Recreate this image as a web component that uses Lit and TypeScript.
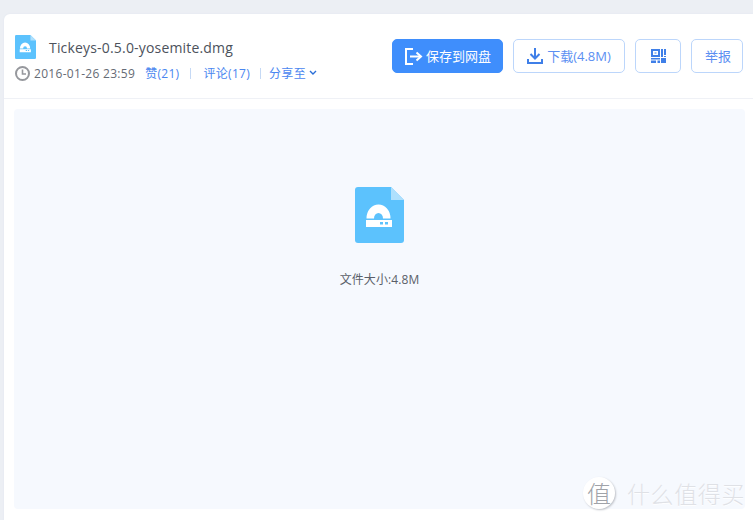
import { LitElement, html, css } from "lit";
import { customElement } from "lit/decorators.js";

const fileIcon = (w: number, h: number) => html`<svg width=${w} height=${h} viewBox="0 0 49 56">
  <path d="M3 0H36L49 13V53a3 3 0 0 1-3 3H3a3 3 0 0 1-3-3V3a3 3 0 0 1 3-3z" fill="#5cc2fd"/>
  <path d="M36 0L49 13H36z" fill="#aee0fd"/>
  <path d="M11.500 31.500a12 14 0 0 1 24 0h-7.500a4.500 5.500 0 0 0-9 0z" fill="#fff"/>
  <path fill-rule="evenodd" d="M11 33H37V40H11zM25 35v2.500h3V35zM30 35v2.500h3V35z" fill="#fff"/>
</svg>`;

@customElement("app-root")
export class AppRoot extends LitElement {
  static styles = css`
    :host {
      display: block;
      width: 753px;
      height: 520px;
      overflow: hidden;
      background: #eceff4;
      padding: 14px 0 0 4px;
      box-sizing: border-box;
      font-family: "Open Sans", "Noto Sans CJK SC", sans-serif;
      font-size: 13px;
      color: #5a5f69;
    }
    .card {
      position: relative;
      height: 506px;
      background: #fff;
      border-radius: 6px 0 0 0;
      box-shadow: 0 0 2px #dfe4ee;
    }
    .head {
      height: 85px;
      box-sizing: border-box;
      border-bottom: 1px solid #eff1f6;
      display: flex;
      justify-content: space-between;
      padding: 20px 10px 0 11px;
    }
    .title {
      display: flex;
      align-items: center;
      height: 26px;
      gap: 13px;
      font-size: 14px;
      color: #4c525c;
      letter-spacing: 0.18px;
    }
    .title svg { display: block; }
    .meta {
      display: flex;
      align-items: center;
      height: 20px;
      margin-top: 3px;
      font-size: 12px;
      color: #666b75;
      letter-spacing: 0.3px;
    }
    .clock { margin-right: 4px; display: block; }
    .link { color: #4a86f0; }
    .sep { width: 1px; height: 11px; background: #c5d9f5; margin: 0 12px 0 11px; }
    .date { margin-right: 10px; }
    .share-sep { margin: 0 8px 0 10px; }
    .chev { margin-left: 3px; display: block; }
    .actions { display: flex; gap: 10px; padding-top: 5px; }
    .btn {
      height: 34px;
      box-sizing: border-box;
      border: 1px solid #bcd6fb;
      border-radius: 5px;
      background: #fff;
      color: #5b8ff2;
      display: flex;
      align-items: center;
      justify-content: center;
      gap: 3px;
      font-size: 13px;
      white-space: nowrap;
    }
    .btn span { position: relative; top: -1px; }
    .btn svg { display: block; }
    .save { width: 111px; background: #3f8efc; border-color: #3f8efc; color: #fff; }
    .down { width: 112px; gap: 4px; }
    .qr { width: 46px; }
    .rep { width: 52px; padding-left: 2px; }
    .panel {
      margin: 10px 8px 0 10px;
      height: 400px;
      background: #f6f9fe;
      border-radius: 4px;
      display: flex;
      flex-direction: column;
      align-items: center;
      padding-top: 78px;
      box-sizing: border-box;
    }
    .panel svg { display: block; }
    .size { margin-top: 28px; font-size: 12px; color: #5a5f69; line-height: 18px; letter-spacing: 0.1px; }
    .mark {
      position: absolute;
      right: 8px;
      bottom: 10px;
      display: flex;
      align-items: center;
      gap: 12px;
      color: #dfe1e6;
      font-size: 23px;
      letter-spacing: 0.6px;
      text-shadow: 0 1px 1px #fff;
      font-family: "Noto Sans CJK SC", sans-serif;
      font-weight: 300;
    }
    .badge {
      width: 32px;
      height: 32px;
      border-radius: 50%;
      background: #fff;
      box-shadow: 1px 1px 2px #bfc2c8;
      color: #a0a3a9;
      text-shadow: none;
      font-size: 24px;
      line-height: 32px;
      text-align: center;
      letter-spacing: 0;
    }
  `;

  render() {
    return html`<div class="card">
      <div class="head">
        <div>
          <div class="title">${fileIcon(21, 24)}<span>Tickeys-0.5.0-yosemite.dmg</span></div>
          <div class="meta">
            <svg class="clock" width="15" height="15" viewBox="0 0 15 15">
              <circle cx="7.500" cy="7.500" r="6.500" fill="none" stroke="#96989d" stroke-width="2"/>
              <path d="M7.500 3.500V8H11" fill="none" stroke="#96989d" stroke-width="1.600"/>
            </svg>
            <span class="date">2016-01-26 23:59</span>
            <span class="link">赞(21)</span><span class="sep"></span>
            <span class="link">评论(17)</span><span class="sep share-sep"></span>
            <span class="link">分享至</span>
            <svg class="chev" width="8" height="6" viewBox="0 0 8 6"><path d="M1 1l3 3 3-3" fill="none" stroke="#2a6fd8" stroke-width="1.400"/></svg>
          </div>
        </div>
        <div class="actions">
          <div class="btn save">
            <svg width="19" height="17" viewBox="0 0 19 17">
              <path d="M9 1H2v15h7M6 8.500h10" fill="none" stroke="#fff" stroke-width="2"/>
              <path d="M12.500 4.500l4.500 4-4.500 4" fill="none" stroke="#fff" stroke-width="2"/>
            </svg>
            <span>保存到网盘</span>
          </div>
          <div class="btn down">
            <svg width="16" height="16" viewBox="0 0 16 16">
              <path d="M8 0v10" stroke="#3f7fe8" stroke-width="2" fill="none"/>
              <path d="M3.500 6L8 10.500 12.500 6" stroke="#3f7fe8" stroke-width="2" fill="none"/>
              <path d="M1 11v4h14v-4" stroke="#3f7fe8" stroke-width="2" fill="none"/>
            </svg>
            <span>下载(4.8M)</span>
          </div>
          <div class="btn qr">
            <svg width="15" height="14" viewBox="0 0 15 14" fill="#3f7fe8">
              <path fill-rule="evenodd" d="M0 0h9v8H0zM2 2v4h5V2z"/>
              <path d="M3.500 3.500h2v1h-2zM10 0h2v8h-2zM13 0h2v6h-2zM13 7h2v1h-2zM0 9h9v1.500H0zM0 11.500h5V14H0zM6.500 11.500H9V14H6.500zM10 9h5v5h-5z"/>
            </svg>
          </div>
          <div class="btn rep"><span>举报</span></div>
        </div>
      </div>
      <div class="panel">
        ${fileIcon(49, 56)}
        <div class="size">文件大小:4.8M</div>
      </div>
      <div class="mark"><span class="badge">值</span><span>什么值得买</span></div>
    </div>`;
  }
}
